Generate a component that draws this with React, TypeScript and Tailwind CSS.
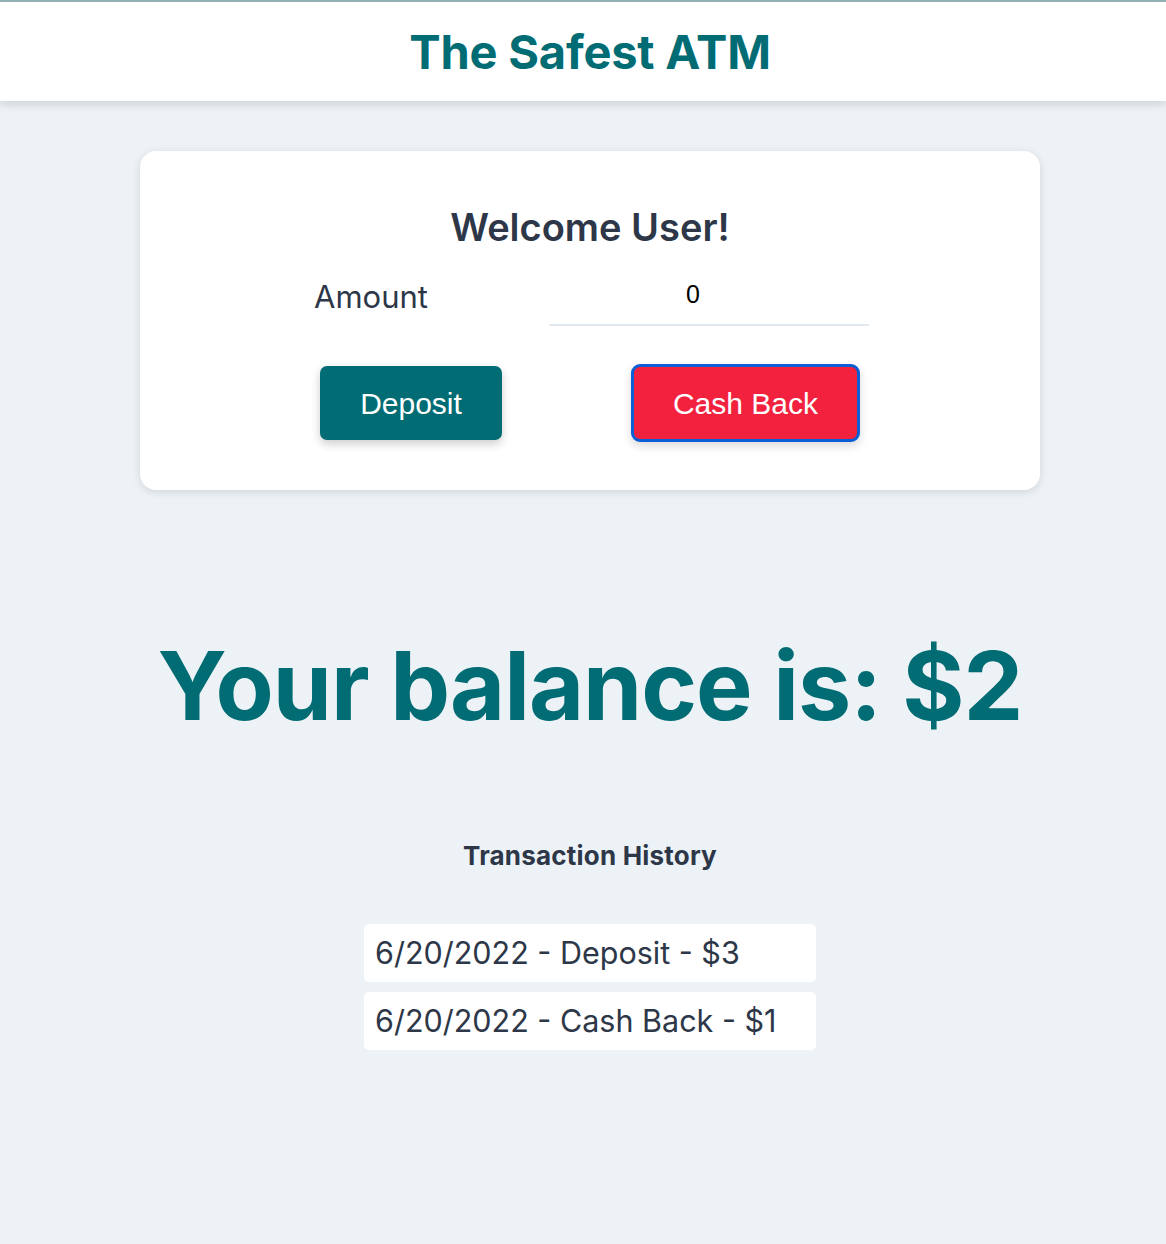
import React from "react";

export default function App() {
  return (
    <div className="min-h-screen w-full bg-[#edf2f7] pl-[14px]" style={{ fontFamily: "Inter, 'Noto Sans', sans-serif" }}>
      <header className="h-[101px] -ml-[14px] pl-[14px] border-t-2 border-[#8fb1b4] bg-white shadow-[0_4px_8px_rgba(0,0,0,0.12)] flex items-center justify-center">
        <h1 className="text-[47px] font-bold text-[#026c74] leading-none tracking-[-0.2px]">The Safest ATM</h1>
      </header>
      <main className="flex flex-col items-center">
        <section className="mt-[50px] w-[900px] h-[339px] rounded-[16px] bg-white shadow-[0_2px_8px_rgba(0,0,0,0.12)] flex flex-col items-center pt-[46px]">
          <h2 className="text-[38px] font-semibold text-[#2d3748] leading-[60px]">Welcome User!</h2>
          <div className="mt-[18px] flex items-start w-[556px] ml-[4px]">
            <label className="w-[235px] text-[31px] text-[#2d3748] leading-[40px] pt-[2px]">Amount</label>
            <div className="w-[320px] h-[51px] border-b-2 border-[#e2e8f0] flex items-start justify-center pr-[32px]">
              <span className="text-[25px] text-black leading-[38px]" style={{ fontFamily: "'Liberation Sans', Arial, sans-serif" }}>0</span>
            </div>
          </div>
          <div className="mt-[38px] flex items-center gap-[129px]">
            <button className="w-[182px] h-[74px] rounded-[7px] bg-[#026c74] text-white text-[30px] shadow-[0_4px_10px_rgba(0,0,0,0.2)]" style={{ fontFamily: "'Liberation Sans', Arial, sans-serif" }}>Deposit</button>
            <button className="w-[229px] h-[78px] rounded-[9px] bg-[#f2223f] border-[3px] border-[#0a5fd4] text-white text-[30px] shadow-[0_4px_10px_rgba(0,0,0,0.15)]" style={{ fontFamily: "'Liberation Sans', Arial, sans-serif" }}>Cash Back</button>
          </div>
        </section>
        <h2 className="mt-[136px] text-[95px] font-bold text-[#026c74] leading-[120px] tracking-[-1px]">Your balance is: $2</h2>
        <h3 className="mt-[94px] text-[26px] font-bold text-[#2d3748] leading-[32px] tracking-[0.2px]">Transaction History</h3>
        <ul className="mt-[52px] flex flex-col gap-[10px]">
          <li className="w-[452px] h-[58px] rounded-[5px] bg-white pl-[11px] flex items-center text-[30.5px] text-[#2d3748]">6/20/2022 - Deposit - $3</li>
          <li className="w-[452px] h-[58px] rounded-[5px] bg-white pl-[11px] flex items-center text-[30.5px] text-[#2d3748]">6/20/2022 - Cash Back - $1</li>
        </ul>
      </main>
    </div>
  );
}
